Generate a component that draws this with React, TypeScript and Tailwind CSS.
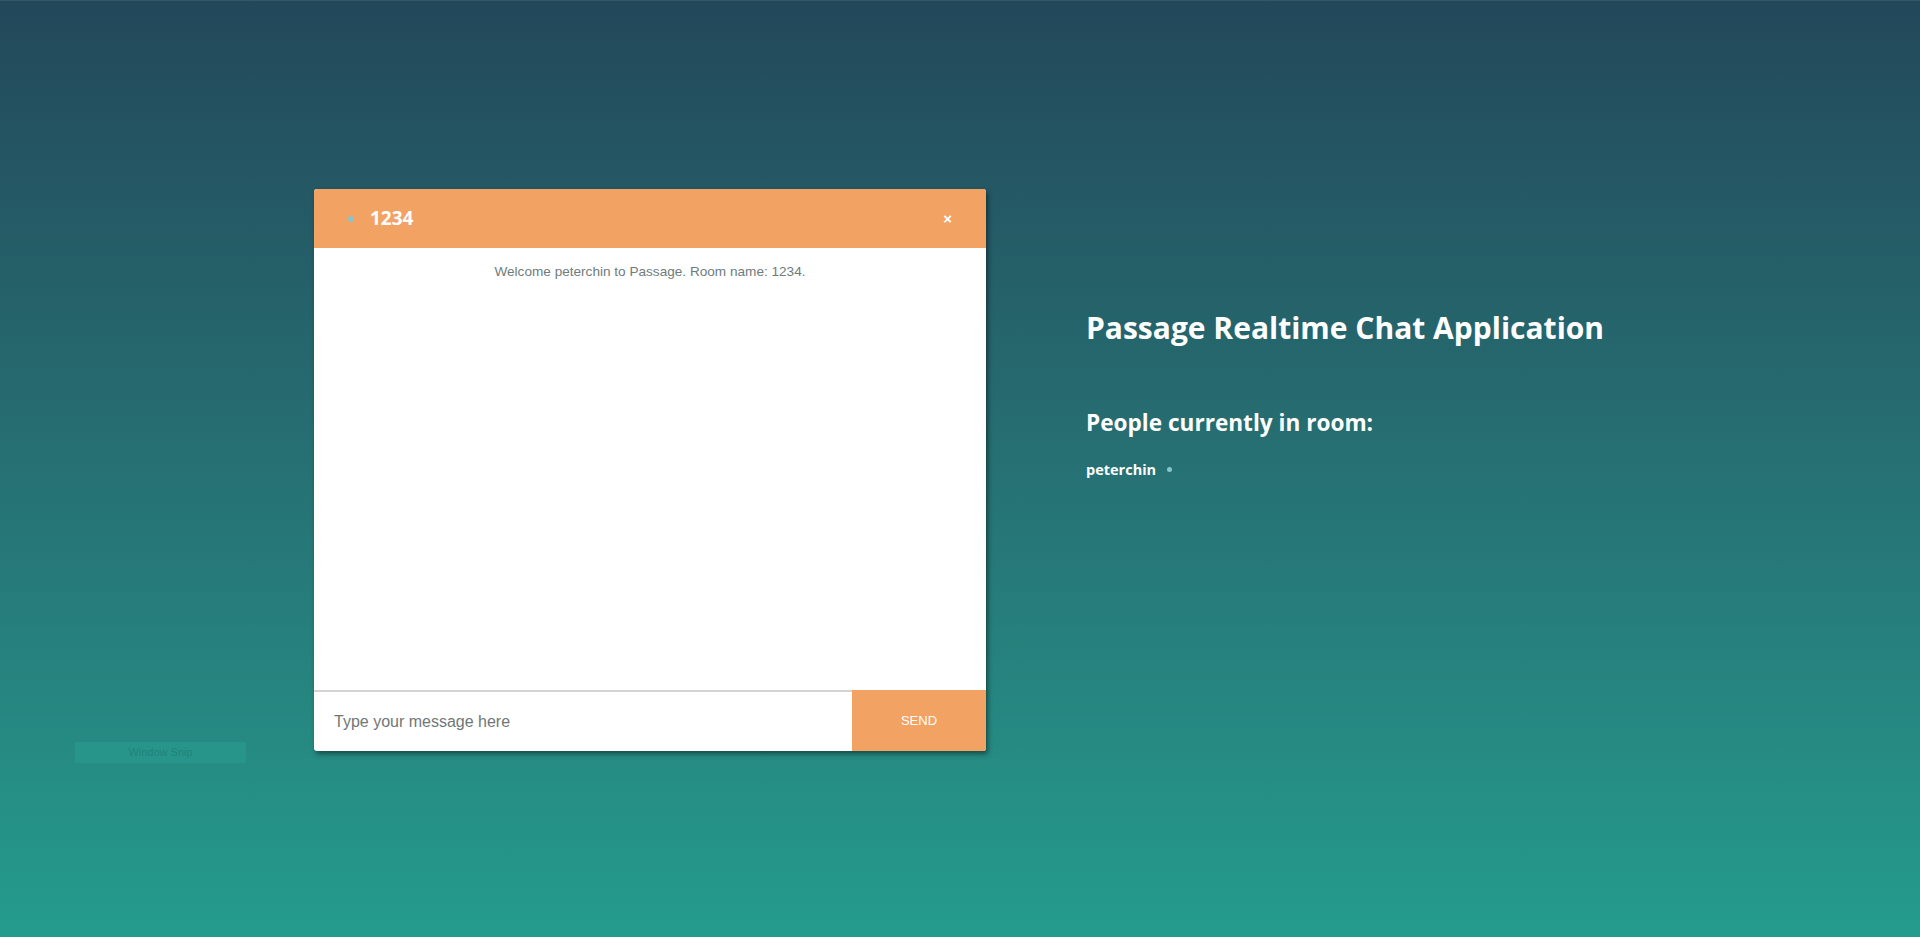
import { useState } from "react";

const users = ["peterchin"];

function ChatBox() {
  const [msg, setMsg] = useState("");
  return (
    <div className="w-[672px] h-[562px] flex flex-col bg-white rounded-[3px] shadow-[2px_3px_5px_rgba(0,0,0,0.45)] overflow-hidden">
      <div className="h-[59px] shrink-0 bg-[#f2a262] flex items-center pl-[34px] pr-[34px]">
        <span className="w-[6px] h-[6px] rounded-full bg-[#8bc3cc] mr-[16px]"></span>
        <span className="text-white font-bold text-[19px] [font-family:'Open_Sans',sans-serif]">1234</span>
        <span className="ml-auto text-white font-bold text-[15px] leading-none [font-family:'Liberation_Sans',sans-serif]">
          ×
        </span>
      </div>
      <div className="flex-1 pt-[14px] text-center text-[13.6px] text-[#6f7c7c] [font-family:'Liberation_Sans',sans-serif]">
        Welcome peterchin to Passage. Room name: 1234.
      </div>
      <div className="h-[61px] shrink-0 flex border-t-2 border-[#d3d3d3]">
        <input
          value={msg}
          onChange={(e) => setMsg(e.target.value)}
          placeholder="Type your message here"
          className="flex-1 pl-[20px] text-[16px] text-[#333] placeholder:text-[#6f7777] outline-none [font-family:'Liberation_Sans',sans-serif]"
        />
        <button className="w-[134px] -mt-[2px] bg-[#f2a262] text-white text-[13px] [font-family:'Liberation_Sans',sans-serif]">
          SEND
        </button>
      </div>
    </div>
  );
}

export default function App() {
  return (
    <div className="relative h-[937px] w-full overflow-hidden bg-gradient-to-b from-[#22485a] to-[#249c8d] border-t border-[#2f5868]">
      <div className="flex pl-[314px] pt-[188px] gap-[100px]">
        <ChatBox />
        <div className="text-white [font-family:'Open_Sans',sans-serif]">
          <h1 className="mt-[117px] text-[30px] font-bold leading-[44px]">
            Passage Realtime Chat Application
          </h1>
          <h2 className="mt-[58px] text-[22.6px] font-bold leading-[30px]">
            People currently in room:
          </h2>
          <ul className="mt-[21px]">
            {users.map((u) => (
              <li key={u} className="flex items-center text-[14.5px] font-bold">
                {u}
                <span className="ml-[11px] w-[5px] h-[5px] rounded-full bg-[#8bc3cc]"></span>
              </li>
            ))}
          </ul>
        </div>
      </div>
      <div className="absolute left-[75px] top-[741px] w-[171px] h-[21px] bg-[#2a9a8f] opacity-70 flex items-center justify-center text-[11px] text-[#1f7f75] [font-family:'Liberation_Sans',sans-serif]">
        Window Snip
      </div>
    </div>
  );
}
